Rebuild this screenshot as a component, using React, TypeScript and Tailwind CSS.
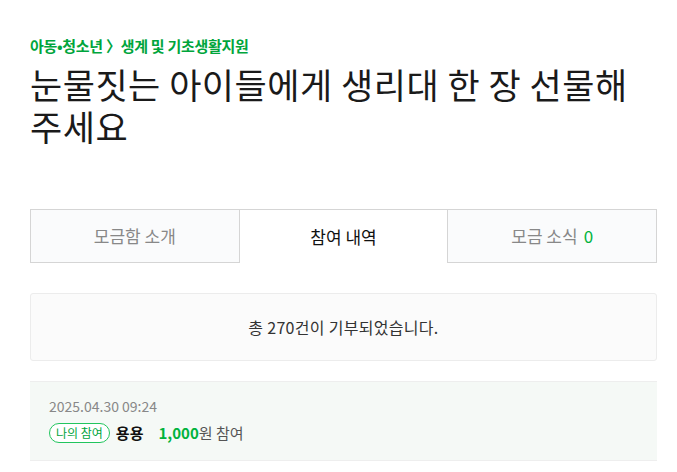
import React from "react";

const font = "font-['Noto_Sans_CJK_KR','Noto_Sans',sans-serif]";

const tabs = [
  { label: "모금함 소개", active: false },
  { label: "참여 내역", active: true },
  { label: "모금 소식", active: false, count: 0 },
];

export default function App() {
  return (
    <div className={`${font} bg-white min-h-[472px] w-[677px] overflow-hidden`}>
      <div className="pl-[30px] pr-[20px] pt-[35px]">
        {/* Breadcrumb */}
        <div className="text-[15px] font-bold leading-[22px] text-[#00a53c] tracking-[-0.3px]">
          아동•청소년 〉생계 및 기초생활지원
        </div>

        {/* Title */}
        <h1 className="mt-[6px] text-[35px] leading-[42px] text-[#1a1a1a] tracking-[0.5px]">
          눈물짓는 아이들에게 생리대 한 장 선물해
          <br />
          주세요
        </h1>

        {/* Tabs */}
        <div className="mt-[62px] flex h-[54px] border-t border-[#d5d5d5]">
          {tabs.map((t, i) => (
            <div
              key={t.label}
              className={
                "flex-1 flex items-center justify-center text-[17px] border-l " +
                (i === tabs.length - 1 ? "border-r " : "") +
                (t.active
                  ? "bg-white text-[#111] border-[#d5d5d5]"
                  : "bg-[#fafbfc] text-[#888] border-[#d5d5d5] border-b")
              }
            >
              {t.label}
              {t.count !== undefined && <span className="ml-[6px] text-[#00b33c]">{t.count}</span>}
            </div>
          ))}
        </div>

        {/* Summary */}
        <div className="mt-[30px] h-[68px] flex items-center justify-center rounded-[3px] border border-[#ececec] bg-[#fbfbfb] text-[16px] tracking-[0.3px] text-[#333]">
          총 270건이 기부되었습니다.
        </div>

        {/* Item */}
        <div className="mt-[20px] h-[80px] border-y border-[#eeeeee] bg-[#f5f9f6] pl-[19px] pt-[15px]">
          <div className="text-[14px] leading-[19px] text-[#888]">2025.04.30 09:24</div>
          <div className="mt-[6px] flex items-center text-[15px]">
            <span className="flex h-[20px] items-center rounded-full border border-[#22c55e] px-[6px] text-[12px] text-[#00a53c] bg-white">
              나의 참여
            </span>
            <span className="ml-[6px] font-bold text-[#111]">용용</span>
            <span className="ml-[15px] font-bold text-[#00b33c]">1,000</span>
            <span className="text-[#555]">원 참여</span>
          </div>
        </div>
      </div>
    </div>
  );
}
